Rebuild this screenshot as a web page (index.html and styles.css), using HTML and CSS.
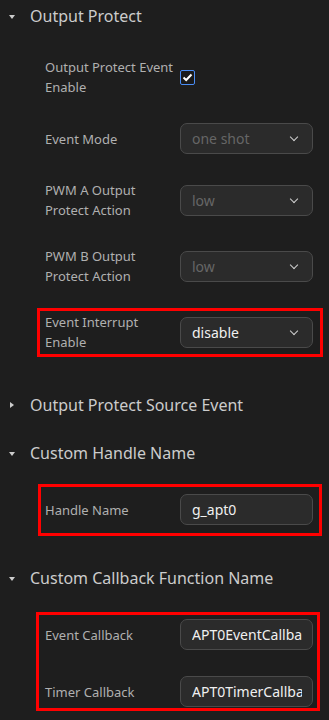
FILE: index.html
```html
<!DOCTYPE html>
<html lang="en">
<head>
    <meta charset="UTF-8">
    <meta name="viewport" content="width=device-width, initial-scale=1.0">
    <title>APT Config</title>
    <link rel="stylesheet" href="styles.css">
</head>
<body>

<!-- Output Protect -->
<div class="section">
    <div class="section-header"><span class="caret caret-open"></span>Output Protect</div>
    <div class="section-body">
        <div class="row">
            <div class="label">Output Protect Event Enable</div>
            <div class="field">
                <span class="checkbox">
                    <svg width="11" height="9" viewBox="0 0 11 9"><path d="M1.5 4.5 L4.2 7 L9.5 1.5" fill="none" stroke="#fff" stroke-width="2"/></svg>
                </span>
            </div>
        </div>
        <div class="row">
            <div class="label">Event Mode</div>
            <div class="select disabled">one shot<span class="chevron"></span></div>
        </div>
        <div class="row">
            <div class="label">PWM A Output Protect Action</div>
            <div class="select disabled">low<span class="chevron"></span></div>
        </div>
        <div class="row">
            <div class="label">PWM B Output Protect Action</div>
            <div class="select disabled">low<span class="chevron"></span></div>
        </div>
        <div class="row mark mark-interrupt">
            <div class="label">Event Interrupt Enable</div>
            <div class="select">disable<span class="chevron"></span></div>
        </div>
    </div>
</div>

<!-- Output Protect Source Event -->
<div class="section">
    <div class="section-header"><span class="caret"></span>Output Protect Source Event</div>
</div>

<!-- Custom Handle Name -->
<div class="section">
    <div class="section-header"><span class="caret caret-open"></span>Custom Handle Name</div>
    <div class="section-body">
        <div class="row mark mark-handle">
            <div class="label">Handle Name</div>
            <div class="input"><span class="value">g_apt0</span></div>
        </div>
    </div>
</div>

<!-- Custom Callback Function Name -->
<div class="section">
    <div class="section-header"><span class="caret caret-open"></span>Custom Callback Function Name</div>
    <div class="section-body">
        <div class="group mark mark-callback">
            <div class="row">
                <div class="label">Event Callback</div>
                <div class="input"><span class="value">APT0EventCallback</span></div>
            </div>
            <div class="row">
                <div class="label">Timer Callback</div>
                <div class="input"><span class="value">APT0TimerCallback</span></div>
            </div>
        </div>
    </div>
</div>

</body>
</html>
```

FILE: styles.css
```css
body {
    margin: 0;
    background-color: #1e1e1e;
    font-family: "Noto Sans", "Open Sans", sans-serif;
    color: #cccccc;
    width: 329px;
    height: 720px;
    overflow: hidden;
}

/* sections */
.section {
    margin-bottom: 16px;
}

.section-header {
    height: 32px;
    line-height: 32px;
    font-size: 16px;
    color: #cccccc;
    padding-left: 30px;
    position: relative;
}

.caret {
    position: absolute;
    left: 10px;
    top: 13px;
    width: 0;
    height: 0;
    border-top: 3.5px solid transparent;
    border-bottom: 3.5px solid transparent;
    border-left: 4px solid #cccccc;
}

.caret-open {
    left: 9px;
    top: 15px;
    border-left: 3.5px solid transparent;
    border-right: 3.5px solid transparent;
    border-top: 4px solid #cccccc;
    border-bottom: 0;
}

.section-body {
    padding: 25px 0 21px 45px;
    display: flex;
    flex-direction: column;
    gap: 26px;
}

.group {
    width: 268px;
    display: flex;
    flex-direction: column;
    gap: 26px;
}

/* rows */
.row {
    width: 268px;
    display: grid;
    grid-template-columns: 135px 133px;
    align-items: center;
    min-height: 31px;
}

.label {
    font-size: 13px;
    line-height: 20px;
    color: #b0b0b0;
}

.field {
    display: flex;
    align-items: center;
}

.checkbox {
    width: 15px;
    height: 15px;
    box-sizing: border-box;
    border: 1px solid #4a8df5;
    border-radius: 2px;
    background-color: #1a1a1a;
    display: flex;
    align-items: center;
    justify-content: center;
}

.select, .input {
    height: 31px;
    box-sizing: border-box;
    border: 1px solid #4a4a4a;
    border-radius: 7px;
    background-color: #2b2b2b;
    font-size: 14px;
    line-height: 29px;
    padding-left: 11px;
    color: #f0f0f0;
    position: relative;
    white-space: nowrap;
}

.input {
    padding-right: 10px;
}

.value {
    display: block;
    overflow: hidden;
    white-space: nowrap;
}

.select.disabled {
    color: #666666;
}

.chevron {
    position: absolute;
    right: 15px;
    top: 10px;
    width: 5px;
    height: 5px;
    border-right: 1.2px solid #d0d0d0;
    border-bottom: 1.2px solid #d0d0d0;
    transform: rotate(45deg);
}

/* red annotation frames */
.mark {
    position: relative;
}

.mark::after {
    content: '';
    position: absolute;
    border: 3px solid #ff0000;
    pointer-events: none;
}

.mark-interrupt::after {
    top: -4px;
    bottom: -5px;
    left: -8px;
    right: -10px;
}

.mark-handle::after {
    top: -10px;
    bottom: -11px;
    left: -7px;
    right: -9px;
}

.mark-callback::after {
    top: -7px;
    bottom: -4px;
    left: -9px;
    right: -7px;
}
```
